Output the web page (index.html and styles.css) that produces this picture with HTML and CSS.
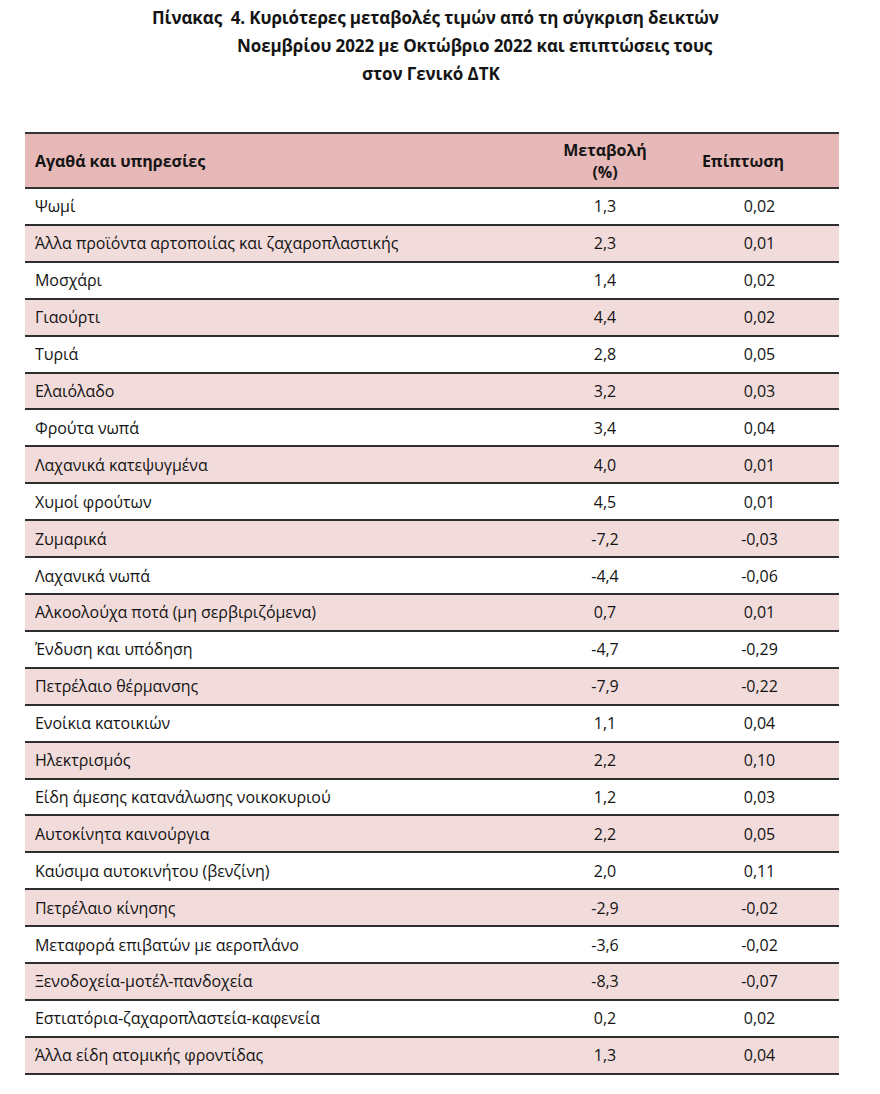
FILE: index.html
```html
<!DOCTYPE html>
<html lang="el">
<head>
<meta charset="utf-8">
<title>Πίνακας 4</title>
<link rel="stylesheet" href="styles.css">
</head>
<body>
<div class="title">
  <div class="t1">Πίνακας&nbsp; 4. Κυριότερες μεταβολές τιμών από τη σύγκριση δεικτών</div>
  <div class="t2">Νοεμβρίου 2022 με Οκτώβριο 2022 και επιπτώσεις τους</div>
  <div class="t3">στον Γενικό ΔΤΚ</div>
</div>
<table class="data">
  <thead>
    <tr>
      <th class="c1">Αγαθά και υπηρεσίες</th>
      <th class="c2">Μεταβολή<br>(%)</th>
      <th class="c3">Επίπτωση</th>
    </tr>
  </thead>
  <tbody>
    <tr><td class="c1">Ψωμί</td><td class="c2">1,3</td><td class="c3">0,02</td></tr>
    <tr><td class="c1">Άλλα προϊόντα αρτοποιίας και ζαχαροπλαστικής</td><td class="c2">2,3</td><td class="c3">0,01</td></tr>
    <tr><td class="c1">Μοσχάρι</td><td class="c2">1,4</td><td class="c3">0,02</td></tr>
    <tr><td class="c1">Γιαούρτι</td><td class="c2">4,4</td><td class="c3">0,02</td></tr>
    <tr><td class="c1">Τυριά</td><td class="c2">2,8</td><td class="c3">0,05</td></tr>
    <tr><td class="c1">Ελαιόλαδο</td><td class="c2">3,2</td><td class="c3">0,03</td></tr>
    <tr><td class="c1">Φρούτα νωπά</td><td class="c2">3,4</td><td class="c3">0,04</td></tr>
    <tr><td class="c1">Λαχανικά κατεψυγμένα</td><td class="c2">4,0</td><td class="c3">0,01</td></tr>
    <tr><td class="c1">Χυμοί φρούτων</td><td class="c2">4,5</td><td class="c3">0,01</td></tr>
    <tr><td class="c1">Ζυμαρικά</td><td class="c2">-7,2</td><td class="c3">-0,03</td></tr>
    <tr><td class="c1">Λαχανικά νωπά</td><td class="c2">-4,4</td><td class="c3">-0,06</td></tr>
    <tr><td class="c1">Αλκοολούχα ποτά (μη σερβιριζόμενα)</td><td class="c2">0,7</td><td class="c3">0,01</td></tr>
    <tr><td class="c1">Ένδυση και υπόδηση</td><td class="c2">-4,7</td><td class="c3">-0,29</td></tr>
    <tr><td class="c1">Πετρέλαιο θέρμανσης</td><td class="c2">-7,9</td><td class="c3">-0,22</td></tr>
    <tr><td class="c1">Ενοίκια κατοικιών</td><td class="c2">1,1</td><td class="c3">0,04</td></tr>
    <tr><td class="c1">Ηλεκτρισμός</td><td class="c2">2,2</td><td class="c3">0,10</td></tr>
    <tr><td class="c1">Είδη άμεσης κατανάλωσης νοικοκυριού</td><td class="c2">1,2</td><td class="c3">0,03</td></tr>
    <tr><td class="c1">Αυτοκίνητα καινούργια</td><td class="c2">2,2</td><td class="c3">0,05</td></tr>
    <tr><td class="c1">Καύσιμα αυτοκινήτου (βενζίνη)</td><td class="c2">2,0</td><td class="c3">0,11</td></tr>
    <tr><td class="c1">Πετρέλαιο κίνησης</td><td class="c2">-2,9</td><td class="c3">-0,02</td></tr>
    <tr><td class="c1">Μεταφορά επιβατών με αεροπλάνο</td><td class="c2">-3,6</td><td class="c3">-0,02</td></tr>
    <tr><td class="c1">Ξενοδοχεία-μοτέλ-πανδοχεία</td><td class="c2">-8,3</td><td class="c3">-0,07</td></tr>
    <tr><td class="c1">Εστιατόρια-ζαχαροπλαστεία-καφενεία</td><td class="c2">0,2</td><td class="c3">0,02</td></tr>
    <tr><td class="c1">Άλλα είδη ατομικής φροντίδας</td><td class="c2">1,3</td><td class="c3">0,04</td></tr>
  </tbody>
</table>
</body>
</html>
```
FILE: styles.css
```css
html, body {
  margin: 0;
  padding: 0;
  background: #ffffff;
}
body {
  font-family: "Open Sans", "Noto Sans", "DejaVu Sans", sans-serif;
  color: #141414;
}
.title {
  padding-top: 4px;
  font-weight: 700;
  font-size: 17px;
  line-height: 28px;
  letter-spacing: -0.1px;
}
.t1 { padding-left: 152px; }
.t2 { padding-left: 237px; }
.t3 { padding-left: 362px; }

.data {
  margin: 44px 0 0 25px;
  width: 814px;
  border-collapse: collapse;
  font-size: 16px;
  letter-spacing: -0.05px;
}
.data th {
  background: #e6b9b8;
  font-weight: 700;
  height: 53px;
  line-height: 22px;
  border-top: 2px solid #333;
  border-bottom: 2px solid #333;
  padding: 0;
}
.data td {
  height: 34.92px;
  padding: 0;
  border-bottom: 2px solid #2e2e2e;
}
.data tbody tr:nth-child(even) td {
  background: #f2dcdb;
}
.data .c1 {
  text-align: left;
  padding-left: 10px;
  width: 495px;
}
.data .c2 {
  text-align: center;
  width: 150px;
}
.data .c3 {
  text-align: center;
}
.data th.c3 {
  padding-right: 33px;
}
```
